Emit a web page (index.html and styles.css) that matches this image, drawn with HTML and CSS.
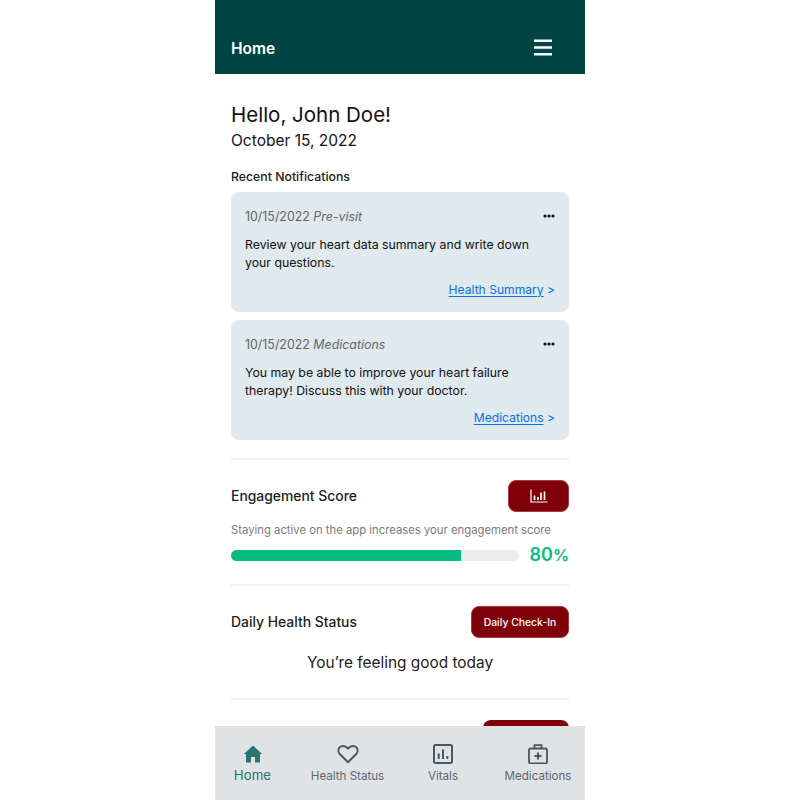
FILE: index.html
```html
<!DOCTYPE html>
<html lang="en">
<head>
<meta charset="utf-8">
<title>Home</title>
<link rel="stylesheet" href="styles.css">
</head>
<body>
<div class="phone">
  <header class="topbar">
    <span class="topbar-title">Home</span>
    <svg class="menu-icon" width="20" height="17" viewBox="0 0 20 17"><path d="M1 1.700h18M1 8.500h18M1 15.300h18" stroke="#fff" stroke-width="2.400" fill="none"/></svg>
  </header>
  <main class="content">
    <h1 class="hello">Hello, John Doe!</h1>
    <p class="date">October 15, 2022</p>
    <h2 class="recent">Recent Notifications</h2>
    <section class="cards">
      <article class="card">
        <div class="card-head">
          <span class="card-meta">10/15/2022 <em>Pre-visit</em></span>
          <svg class="dots" width="12" height="4" viewBox="0 0 12 4"><circle cx="2" cy="2" r="1.600"/><circle cx="6" cy="2" r="1.600"/><circle cx="10" cy="2" r="1.600"/></svg>
        </div>
        <p class="card-text">Review your heart data summary and write down your questions.</p>
        <div class="card-link"><a href="#">Health Summary</a> &gt;</div>
      </article>
      <article class="card">
        <div class="card-head">
          <span class="card-meta">10/15/2022 <em>Medications</em></span>
          <svg class="dots" width="12" height="4" viewBox="0 0 12 4"><circle cx="2" cy="2" r="1.600"/><circle cx="6" cy="2" r="1.600"/><circle cx="10" cy="2" r="1.600"/></svg>
        </div>
        <p class="card-text">You may be able to improve your heart failure therapy! Discuss this with your doctor.</p>
        <div class="card-link"><a href="#">Medications</a> &gt;</div>
      </article>
    </section>
    <section class="block block-engagement">
      <div class="block-head">
        <h3 class="block-title">Engagement Score</h3>
        <button class="btn btn-icon" type="button">
          <svg width="18" height="14" viewBox="0 0 18 14" fill="none" stroke="#fff"><path d="M1 0.500V13H17.500" stroke-width="1.200"/><path d="M4.500 6.500V11M8 8V11M11 3.500V11M14.500 2.500V11" stroke-width="1.700"/></svg>
        </button>
      </div>
      <p class="hint">Staying active on the app increases your engagement score</p>
      <div class="progress-row">
        <div class="track"><div class="fill" style="width:80%"></div></div>
        <span class="pct">80<span class="pct-sign">%</span></span>
      </div>
    </section>
    <section class="block block-status">
      <div class="block-head">
        <h3 class="block-title">Daily Health Status</h3>
        <button class="btn btn-text" type="button">Daily Check-In</button>
      </div>
      <p class="feeling">You’re feeling good today</p>
    </section>
    <section class="block block-next">
      <div class="block-head block-head-end">
        <button class="btn btn-text btn-short" type="button"></button>
      </div>
    </section>
  </main>
  <nav class="tabbar">
    <a class="tab tab-active" href="#">
      <svg width="20" height="20" viewBox="0 0 20 20"><path d="M10 1.500 0.800 10H3v8.500h5v-5.500h4v5.500h5V10h2.200z" fill="#2c7373"/></svg>
      <span>Home</span>
    </a>
    <a class="tab" href="#">
      <svg width="22" height="20" viewBox="0 0 22 20" fill="none"><path d="M11 18.200 3 10.300C.8 8 1 5 2.800 3.200 4.800 1.300 8.500 1.300 11 4.600 13.500 1.300 17.200 1.300 19.200 3.200 21 5 21.200 8 19 10.300z" stroke="#4b5563" stroke-width="2" stroke-linejoin="round"/></svg>
      <span>Health Status</span>
    </a>
    <a class="tab" href="#">
      <svg width="20" height="20" viewBox="0 0 20 20" fill="none"><rect x="1" y="1" width="18" height="18" rx="1.500" stroke="#4b5563" stroke-width="2"/><path d="M5.700 15V9.500M10 15V5.500M14.300 15V12" stroke="#4b5563" stroke-width="2"/></svg>
      <span>Vitals</span>
    </a>
    <a class="tab" href="#">
      <svg width="20" height="20" viewBox="0 0 20 20" fill="none"><rect x="1" y="4.500" width="18" height="15" rx="1.500" stroke="#4b5563" stroke-width="1.800"/><path d="M6.500 4.500V1.200H13.500V4.500" stroke="#4b5563" stroke-width="1.800"/><path d="M10 8.500V15.500M6.500 12H13.500" stroke="#4b5563" stroke-width="2"/></svg>
      <span>Medications</span>
    </a>
  </nav>
</div>
</body>
</html>
```
FILE: styles.css
```css
* { box-sizing: border-box; }
html, body { margin: 0; height: 100%; background: #fff; overflow: hidden; }
body { font-family: Inter, "Liberation Sans", sans-serif; color: #1a1a1a; }
h1, h2, h3, p { margin: 0; font-weight: 400; }

.phone {
  width: 370px;
  height: 800px;
  margin: 0 auto;
  display: flex;
  flex-direction: column;
  overflow: hidden;
}

.topbar {
  flex: none;
  height: 74px;
  background: #004444;
  color: #fff;
  display: flex;
  justify-content: space-between;
  align-items: flex-end;
  padding: 0 32px 18px 16px;
}
.topbar-title { font-size: 15.500px; line-height: 16px; font-weight: 600; margin-bottom: -1px; }
.menu-icon { display: block; }

.content {
  flex: 1;
  min-height: 0;
  overflow: hidden;
  padding: 28px 16px 0;
}
.hello { font-size: 20.500px; line-height: 26px; color: #111; }
.date { font-size: 15.500px; line-height: 20px; margin-top: 3px; color: #111; }
.recent { font-size: 12.300px; line-height: 16px; font-weight: 500; margin-top: 18px; color: #222; }

.cards { display: flex; flex-direction: column; gap: 8px; margin-top: 7px; }
.card {
  height: 120px;
  background: #dfe9ee;
  border-radius: 8px;
  padding: 16px 14px 0;
}
.card-head { display: flex; justify-content: space-between; align-items: center; height: 16px; }
.card-meta { font-size: 12.400px; line-height: 16px; color: #666; padding-top: 1px; }
.dots { fill: #111; }
.card-text { font-size: 12.300px; line-height: 17.500px; margin-top: 12px; padding-right: 20px; color: #111; }
.card-link { font-size: 12.100px; line-height: 16px; margin-top: 11px; text-align: right; color: #0870e4; }
.card-link a { color: #0870e4; text-decoration: underline; text-underline-offset: 2px; }

.block { border-top: 2px solid #f0f0f0; }
.block-engagement { margin-top: 18px; height: 126px; padding-top: 20px; }
.block-status { height: 114px; padding-top: 20px; }
.block-next { padding-top: 20px; }
.block-head { display: flex; justify-content: space-between; align-items: center; height: 32px; }
.block-head-end { justify-content: flex-end; }
.block-title { font-size: 13.900px; font-weight: 500; color: #222; }

.btn {
  height: 32px;
  border: 1px solid #a83a3f;
  border-radius: 8px;
  background: #7f0009;
  color: #fff;
  font-family: inherit;
  padding: 0;
  display: flex;
  align-items: center;
  justify-content: center;
}
.btn-icon { width: 61px; }
.btn-text { width: 98px; font-size: 10.400px; font-weight: 500; }
.btn-short { width: 86px; border: 0; }

.hint { font-size: 11.300px; line-height: 16px; color: #7a7a7a; margin-top: 10px; }
.progress-row { display: flex; align-items: center; justify-content: space-between; margin-top: 7px; }
.track { width: 288px; height: 11px; border-radius: 6px; background: #ececec; overflow: hidden; }
.fill { height: 100%; background: #05bd80; }
.pct { font-size: 18px; line-height: 20px; font-weight: 600; color: #05bd80; }
.pct-sign { font-size: 16px; }

.feeling { font-size: 15.400px; line-height: 20px; text-align: center; color: #222; margin-top: 15px; }

.tabbar {
  flex: none;
  height: 74px;
  background: #dfe3e6;
  display: grid;
  grid-template-columns: 75px 115px 76px 114px;
  padding-top: 18px;
}
.tab {
  display: flex;
  flex-direction: column;
  align-items: center;
  gap: 4px;
  font-size: 11.600px;
  line-height: 16px;
  color: #5d6670;
  text-decoration: none;
}
.tab svg { display: block; }
.tab-active { color: #2c7373; font-size: 13.300px; gap: 3px; }
```
